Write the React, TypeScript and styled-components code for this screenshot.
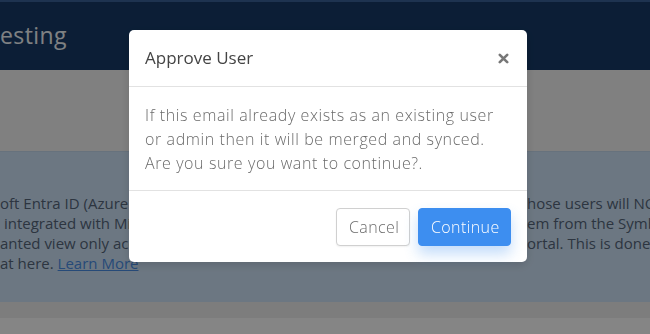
import React from 'react';
import styled, { createGlobalStyle } from 'styled-components';

const GlobalStyle = createGlobalStyle`
  html, body {
    margin: 0;
    padding: 0;
    background: #ffffff;
    overflow: hidden;
  }
  * { box-sizing: border-box; }
`;

const Page = styled.div`
  width: 650px;
  height: 334px;
  font-family: 'Open Sans', 'Liberation Sans', sans-serif;
  background: #ffffff;
  overflow: hidden;
`;

const TopBar = styled.header`
  height: 70px;
  background: #173b68;
  border-top: 2px solid #3a629a;
  display: flex;
  align-items: center;
  padding-bottom: 2px;
`;

const PageTitle = styled.h1`
  margin: 0;
  font-size: 23px;
  font-weight: 400;
  color: #f4f8fc;
  letter-spacing: 0.4px;
`;

const Content = styled.main`
  background: #f6f6f6;
  padding-top: 81px;
`;

const InfoBox = styled.section`
  height: 151px;
  background: #d0e5fa;
  border-top: 1px solid #c6dbef;
  padding-top: 41px;
  display: flex;
  flex-direction: column;
`;

const InfoLine = styled.div`
  display: flex;
  height: 20px;
  line-height: 20px;
  font-size: 15px;
  font-weight: 400;
  color: #56677c;
  white-space: nowrap;
`;

const LeftPart = styled.span`
  flex: 0 0 527px;
  overflow: hidden;
`;

const RightPart = styled.span`
  flex: 0 0 auto;
`;

const Link = styled.a`
  color: #4a8ee6;
  text-decoration: underline;
`;

const Footer = styled.div`
  height: 16px;
  background: #f0f0f0;
`;

const Backdrop = styled.div`
  position: fixed;
  inset: 0;
  background: rgba(0, 0, 0, 0.48);
`;

const Dialog = styled.div`
  position: fixed;
  top: 30px;
  left: 129px;
  width: 398px;
  background: #ffffff;
  border-radius: 5px;
  box-shadow: 0 3px 10px rgba(0, 0, 0, 0.15);
  font-family: 'Open Sans', 'Liberation Sans', sans-serif;
`;

const DialogHeader = styled.div`
  height: 57px;
  display: flex;
  align-items: center;
  justify-content: space-between;
  padding: 0 16px;
  border-bottom: 1px solid #e2e2e2;
`;

const DialogTitle = styled.h5`
  margin: 0;
  font-size: 17px;
  font-weight: 400;
  color: #444444;
  padding-bottom: 2px;
`;

const CloseButton = styled.button`
  border: 0;
  background: transparent;
  padding: 0;
  width: 16px;
  height: 16px;
  display: flex;
  align-items: center;
  justify-content: center;
  cursor: pointer;
`;

const DialogBody = styled.div`
  padding: 16px;
  height: 104px;
  border-bottom: 1px solid #e2e2e2;
  font-size: 16px;
  line-height: 24px;
  font-weight: 300;
  letter-spacing: 0.6px;
  color: #6a6a6a;
`;

const BodyLine = styled.div`
  white-space: nowrap;
`;

const DialogFooter = styled.div`
  height: 71px;
  display: flex;
  align-items: center;
  justify-content: flex-end;
  gap: 8px;
  padding: 1px 16px 0;
`;

const Button = styled.button<{ $primary?: boolean }>`
  height: 38px;
  padding: 0 12px;
  border-radius: 4px;
  font-family: 'Open Sans', 'Liberation Sans', sans-serif;
  font-size: 16px;
  font-weight: 300;
  letter-spacing: 0.4px;
  cursor: pointer;
  border: 1px solid ${({ $primary }) => ($primary ? '#3d8ef0' : '#d0d0d0')};
  background: ${({ $primary }) => ($primary ? '#3d8ef0' : '#ffffff')};
  color: ${({ $primary }) => ($primary ? '#ffffff' : '#6c6c6c')};
  box-shadow: ${({ $primary }) =>
    $primary ? '0 8px 14px rgba(61, 142, 240, 0.3)' : '0 1px 2px rgba(0, 0, 0, 0.06)'};
`;

const CancelButton = styled(Button)`
  width: 74px;
`;

const ContinueButton = styled(Button)`
  width: 93px;
`;

export default function App() {
  return (
    <>
      <GlobalStyle />
      <Page>
        <TopBar>
          <PageTitle>esting</PageTitle>
        </TopBar>
        <Content>
          <InfoBox>
            <InfoLine>
              <LeftPart>oft Entra ID (Azure AD) is connected, users are synced automatically and t</LeftPart>
              <RightPart>hose users will NOT</RightPart>
            </InfoLine>
            <InfoLine>
              <LeftPart>&nbsp;integrated with Microsoft Entra ID you will need to remove th</LeftPart>
              <RightPart>em from the Symbiosis</RightPart>
            </InfoLine>
            <InfoLine>
              <LeftPart>anted view only access to their organisation in the client p</LeftPart>
              <RightPart>ortal. This is done via</RightPart>
            </InfoLine>
            <InfoLine>
              <LeftPart>
                at here. <Link>Learn More</Link>
              </LeftPart>
            </InfoLine>
          </InfoBox>
          <Footer />
        </Content>
      </Page>
      <Backdrop />
      <Dialog role="dialog">
        <DialogHeader>
          <DialogTitle>Approve User</DialogTitle>
          <CloseButton aria-label="Close">
            <svg width="11" height="11" viewBox="0 0 11 11">
              <path d="M1.8 1.8 L9.2 9.2 M9.2 1.8 L1.8 9.2" stroke="#777777" strokeWidth="2.6" strokeLinecap="round" />
            </svg>
          </CloseButton>
        </DialogHeader>
        <DialogBody>
          <BodyLine>If this email already exists as an existing user</BodyLine>
          <BodyLine>or admin then it will be merged and synced.</BodyLine>
          <BodyLine>Are you sure you want to continue?.</BodyLine>
        </DialogBody>
        <DialogFooter>
          <CancelButton>Cancel</CancelButton>
          <ContinueButton $primary>Continue</ContinueButton>
        </DialogFooter>
      </Dialog>
    </>
  );
}
